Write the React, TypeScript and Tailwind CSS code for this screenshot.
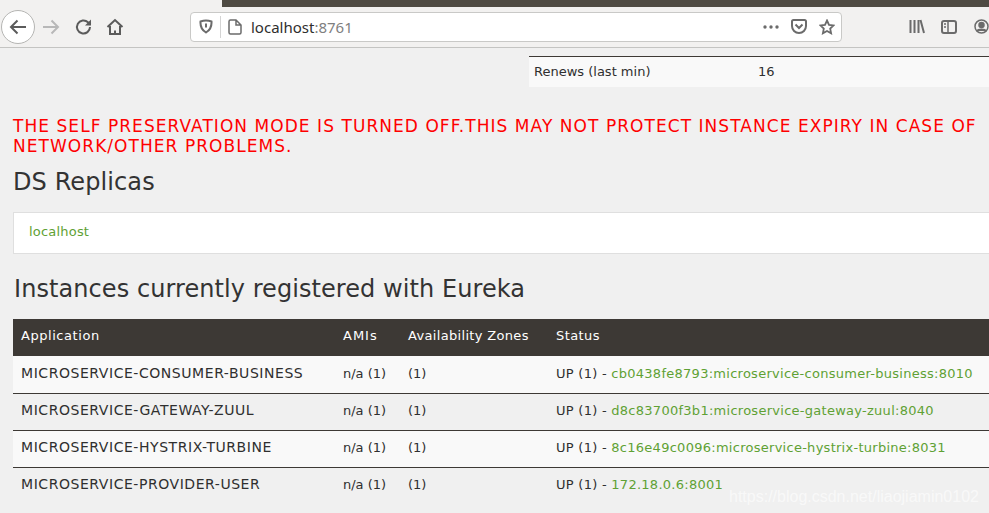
import React from 'react';

const rows = [
  { app: 'MICROSERVICE-CONSUMER-BUSINESS', link: 'cb0438fe8793:microservice-consumer-business:8010', bg: 'bg-[#f9f9f9]' },
  { app: 'MICROSERVICE-GATEWAY-ZUUL', link: 'd8c83700f3b1:microservice-gateway-zuul:8040', bg: '' },
  { app: 'MICROSERVICE-HYSTRIX-TURBINE', link: '8c16e49c0096:microservice-hystrix-turbine:8031', bg: 'bg-[#f9f9f9]' },
  { app: 'MICROSERVICE-PROVIDER-USER', link: '172.18.0.6:8001', bg: '' },
];

const Toolbar = () => (
  <div className="h-[48px] pt-[6px] bg-[#f2f1f0] border-b border-[#c4c4c2] relative flex items-center shrink-0">
    <div className="absolute top-0 left-[222px] right-0 h-[7px] bg-[#4f4b43]" />
    <div className="w-[34px] h-[34px] ml-[1px] rounded-full bg-white border border-[#b5b5b3] flex items-center justify-center">
      <svg width="18" height="16" viewBox="0 0 18 16" fill="none" stroke="#5b5b5b" strokeWidth="2"><path d="M17 8H2M8.500 1.500L2 8l6.500 6.500" /></svg>
    </div>
    <svg className="ml-[7px]" width="18" height="16" viewBox="0 0 18 16" fill="none" stroke="#b8b8b8" strokeWidth="2"><path d="M1 8h15M9.500 1.500L16 8l-6.500 6.500" /></svg>
    <svg className="ml-[15px]" width="18" height="18" viewBox="0 0 18 18" fill="none" stroke="#5b5b5b" strokeWidth="2"><path d="M15 9a6.500 6.500 0 1 1-2-4.700L15.500 6.500" /><path d="M16 1.500v6h-6" fill="#5b5b5b" stroke="none" /></svg>
    <svg className="ml-[13px]" width="18" height="18" viewBox="0 0 18 18" fill="none" stroke="#5b5b5b" strokeWidth="2"><path d="M1.500 9L9 2l7.500 7M4 8v8h10V8" /><path d="M8 12.500h2V16H8z" fill="#5b5b5b" strokeWidth="0" /></svg>
    <div className="ml-[66px] w-[652px] h-[30px] bg-white border border-[#c9c9c7] rounded-[4px] flex items-center shrink-0">
      <svg className="ml-[8px]" width="14" height="15" viewBox="0 0 14 15" fill="none" stroke="#6b6b6b" strokeWidth="2"><path d="M1.500 2.500Q7 .5 12.500 2.500Q13 10 7 13.500Q1 10 1.500 2.500z" /><path d="M7 4.500v4" /></svg>
      <div className="ml-[7px] w-px h-[22px] bg-[#d4d4d4]" />
      <svg className="ml-[7px]" width="14" height="16" viewBox="0 0 14 16" fill="none" stroke="#6b6b6b" strokeWidth="1.500"><path d="M1 2.500A1.500 1.500 0 0 1 2.500 1H8l5 5v7.500a1.500 1.500 0 0 1-1.500 1.500h-9A1.500 1.500 0 0 1 1 13.500zM8 1v5h5" /></svg>
      <span className="ml-[9px] pt-[2px] text-[15px] text-[#2e2e2e] font-['Noto_Sans',sans-serif]">localhost<span className="text-[#7f7f7f]">:8761</span></span>
      <div className="ml-auto flex items-center">
        <svg width="16" height="4" viewBox="0 0 16 4" fill="#6b6b6b"><circle cx="2" cy="2" r="1.700" /><circle cx="8" cy="2" r="1.700" /><circle cx="14" cy="2" r="1.700" /></svg>
        <svg className="ml-[12px]" width="16" height="15" viewBox="0 0 16 15" fill="none" stroke="#6b6b6b" strokeWidth="2"><path d="M2.500 1h11A1.500 1.500 0 0 1 15 2.500V7a7 7 0 0 1-14 0V2.500A1.500 1.500 0 0 1 2.500 1z" /><path d="M4.500 5.500L8 9l3.500-3.500" /></svg>
        <svg className="ml-[12px] mr-[6px]" width="16" height="16" viewBox="0 0 16 16" fill="none" stroke="#6b6b6b" strokeWidth="1.800"><path d="M8 1.500l2 4.300 4.600.6-3.400 3.200.9 4.700L8 12l-4.100 2.300.9-4.700L1.400 6.400 6 5.800z" /></svg>
      </div>
    </div>
    <svg className="ml-[67px]" width="16" height="15" viewBox="0 0 16 15" fill="none" stroke="#6b6b6b" strokeWidth="2"><path d="M1.500 1v13M5.500 1v13M9.500 1v13M11.500 1l3.500 13" /></svg>
    <svg className="ml-[16px]" width="16" height="14" viewBox="0 0 16 14" fill="none" stroke="#6b6b6b" strokeWidth="2"><rect x="1" y="1" width="14" height="12" rx="2" /><path d="M7 1v12M3 4h2M3 7h2" strokeWidth="1.500" /></svg>
    <svg className="ml-[17px] shrink-0" width="15" height="15" viewBox="0 0 15 15" fill="none" stroke="#6b6b6b" strokeWidth="1.500"><circle cx="7.500" cy="7.500" r="6.500" /><circle cx="7.500" cy="6" r="2.500" fill="#6b6b6b" /><path d="M3 12c1-2.500 8-2.500 9 0" fill="#6b6b6b" /></svg>
  </div>
);

export default function App() {
  return (
    <div className="relative w-[989px] h-[513px] overflow-hidden bg-[#f0f0f0] text-[#333] font-['DejaVu_Sans',sans-serif] flex flex-col">
      <Toolbar />
      <div className="flex justify-end mt-[8px]">
        <div className="w-[460px] h-[31px] bg-[#f9f9f9] border-t border-[#3d3935] flex items-center text-[13px] text-[#2f2f2f]">
          <span className="w-[229px] pl-[5px]">Renews (last min)</span>
          <span>16</span>
        </div>
      </div>
      <div className="pl-[13px] mt-[29px] text-[17px] tracking-[1.05px] leading-[20px] text-[#ff0000] whitespace-nowrap">
        <div>THE SELF PRESERVATION MODE IS TURNED OFF.THIS MAY NOT PROTECT INSTANCE EXPIRY IN CASE OF</div>
        <div>NETWORK/OTHER PROBLEMS.</div>
      </div>
      <h1 className="pl-[13px] mt-[10px] text-[24px] tracking-[0.1px] leading-[32px] text-[#333]">DS Replicas</h1>
      <div className="ml-[13px] mt-[14px] h-[42px] pb-[2px] bg-white border border-[#dfdfdf] border-r-0 flex items-center pl-[15px] text-[13px] tracking-[0.2px] text-[#5fa134]">localhost</div>
      <h1 className="pl-[14px] mt-[19px] text-[24px] tracking-[0.07px] leading-[32px] text-[#333]">Instances currently registered with Eureka</h1>
      <div className="ml-[13px] mt-[14px] text-[13px] text-[#2f2f2f]">
        <div className="h-[37px] pb-[3px] bg-[#3d3935] text-white flex items-center pl-[8px]">
          <span className="w-[322px] tracking-[0.55px]">Application</span>
          <span className="w-[65px] tracking-[1px]">AMIs</span>
          <span className="w-[148px] tracking-[0.33px]">Availability Zones</span>
          <span className="tracking-[0.4px]">Status</span>
        </div>
        {rows.map((r, i) => (
          <div key={r.app} className={`h-[37px] pb-[3px] flex items-center pl-[8px] whitespace-nowrap ${i > 0 ? 'border-t border-[#3d3935]' : 'pt-[1px]'} ${r.bg}`}>
            <span className="w-[322px] text-[14px] tracking-[0.55px]">{r.app}</span>
            <span className="w-[65px]">n/a (1)</span>
            <span className="w-[148px]">(1)</span>
            <span className="tracking-[0.27px]">UP (1) - <span className="text-[#5fa134]">{r.link}</span></span>
          </div>
        ))}
      </div>
      <div className="absolute left-[729px] top-[485px] text-[16px] text-white/60 font-['Liberation_Sans',sans-serif]">https://blog.csdn.net/liaojiamin0102</div>
    </div>
  );
}
